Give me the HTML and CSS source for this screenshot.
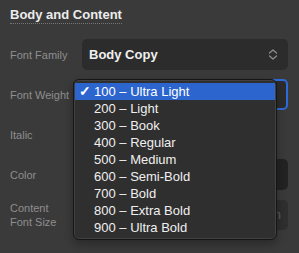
FILE: index.html
```html
<!DOCTYPE html>
<html lang="en">
<head>
  <meta charset="UTF-8" />
  <title>Body and Content</title>
  <link rel="stylesheet" href="styles.css">
</head>
<body>
  <div class="panel">
    <h2 class="section-title">Body and Content</h2>

    <div class="row">
      <label class="row-label">Font Family</label>
      <div class="select">
        <span class="select-value">Body Copy</span>
        <svg class="chevrons" width="10" height="11" viewBox="0 0 10 11">
          <path d="M1.5 4 L5 1 L8.5 4 M1.5 7 L5 10 L8.5 7" fill="none" stroke="#8d8d8d" stroke-width="1.3" stroke-linecap="round" stroke-linejoin="round"/>
        </svg>
      </div>
    </div>

    <div class="row">
      <label class="row-label">Font Weight</label>
      <div class="select focused">
        <span class="select-value"></span>
        <svg class="chevrons" width="10" height="11" viewBox="0 0 10 11">
          <path d="M1.5 4 L5 1 L8.5 4 M1.5 7 L5 10 L8.5 7" fill="none" stroke="#8d8d8d" stroke-width="1.3" stroke-linecap="round" stroke-linejoin="round"/>
        </svg>
      </div>
    </div>

    <div class="row">
      <label class="row-label">Italic</label>
      <div class="blank"></div>
    </div>

    <div class="row">
      <label class="row-label">Color</label>
      <div class="swatch"></div>
    </div>

    <div class="row">
      <label class="row-label two-line">Content<br>Font Size</label>
      <div class="input"><span class="input-hint">Design</span></div>
    </div>

    <!-- open menu for Font Weight -->
    <ul class="menu">
      <li class="menu-item active"><span class="check">✓</span>100 – Ultra Light</li>
      <li class="menu-item">200 – Light</li>
      <li class="menu-item">300 – Book</li>
      <li class="menu-item">400 – Regular</li>
      <li class="menu-item">500 – Medium</li>
      <li class="menu-item">600 – Semi-Bold</li>
      <li class="menu-item">700 – Bold</li>
      <li class="menu-item">800 – Extra Bold</li>
      <li class="menu-item">900 – Ultra Bold</li>
    </ul>
  </div>
</body>
</html>
```

FILE: styles.css
```css
* {
  box-sizing: border-box;
  margin: 0;
  padding: 0;
}

html, body {
  background: #3a3a3a;
}

body {
  font-family: "Liberation Sans", Arial, sans-serif;
  width: 299px;
  height: 253px;
  overflow: hidden;
}

.panel {
  position: relative;
  padding: 5px 11px 0 10px;
}

.section-title {
  display: inline-block;
  font-size: 13px;
  font-weight: 700;
  color: #ececec;
  line-height: 15px;
  padding-bottom: 1px;
  border-bottom: 1px dotted #767676;
  margin-bottom: 15px;
}

.row {
  display: grid;
  grid-template-columns: 72px 1fr;
  align-items: center;
  height: 31px;
  margin-bottom: 9px;
}

.row-label {
  font-size: 11px;
  color: #8e8e8e;
}

.two-line {
  line-height: 14px;
}

.select {
  height: 31px;
  background: #2c2c2c;
  border-radius: 5px;
  display: flex;
  align-items: center;
  justify-content: space-between;
  padding: 0 10px 0 7px;
}

.select-value {
  font-size: 13px;
  font-weight: 700;
  color: #f0f0f0;
}

.select.focused {
  border: 2px solid #2d6cd8;
  padding: 0 8px 0 5px;
}

.blank {
  height: 31px;
}

.swatch {
  height: 31px;
  background: #232323;
  border-radius: 5px;
}

.input {
  height: 30px;
  background: #2f2f2f;
  border-radius: 5px;
  display: flex;
  align-items: center;
  justify-content: flex-end;
  padding-right: 7px;
}

.input-hint {
  font-size: 13px;
  color: #5c5c5c;
}

.menu {
  position: absolute;
  left: 73px;
  top: 79px;
  width: 204px;
  height: 161px;
  list-style: none;
  background: #2f2f2f;
  border: 1px solid #161616;
  box-shadow: inset 0 0 0 1px #414141, 0 4px 10px rgba(0, 0, 0, 0.3);
  border-radius: 6px;
  padding: 3px 1px;
}

.menu-item {
  height: 17px;
  line-height: 17px;
  font-size: 13px;
  color: #efefef;
  padding-left: 19px;
  position: relative;
}

.menu-item.active {
  background: #2d65cf;
  color: #ffffff;
}

.check {
  position: absolute;
  left: 4px;
  top: 0;
  font-size: 14px;
  font-weight: 700;
}
```
